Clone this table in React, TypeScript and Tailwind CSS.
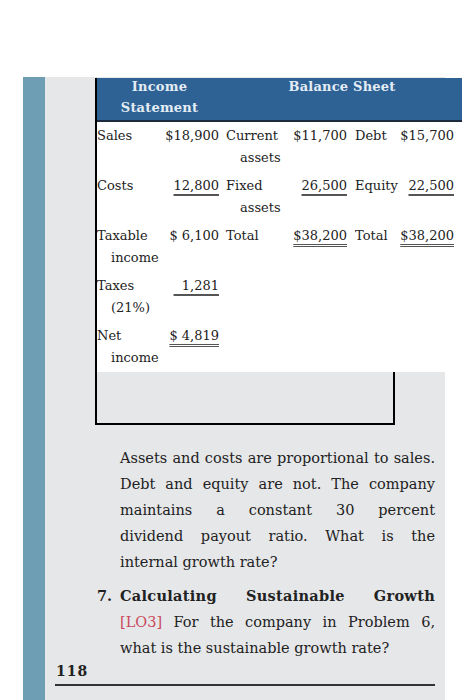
const rows = [
  { label: "Sales", amt: "$18,900", bsLabel: "Current assets", bsAmt: "$11,700", rLabel: "Debt", rAmt: "$15,700", line: "" },
  { label: "Costs", amt: "12,800", bsLabel: "Fixed assets", bsAmt: "26,500", rLabel: "Equity", rAmt: "22,500", line: "single" },
  { label: "Taxable income", amt: "$\u00a06,100", bsLabel: "Total", bsAmt: "$38,200", rLabel: "Total", rAmt: "$38,200", line: "total" },
  { label: "Taxes (21%)", amt: "\u00a0\u00a01,281", bsLabel: "", bsAmt: "", rLabel: "", rAmt: "", line: "single" },
  { label: "Net income", amt: "$\u00a04,819", bsLabel: "", bsAmt: "", rLabel: "", rAmt: "", line: "double" },
];

const single = "underline decoration-[1.5px] decoration-[#555] underline-offset-[4px]";
const dbl = "underline decoration-double decoration-1 decoration-[#555] underline-offset-[4px]";

function Table() {
  return (
    <div className="w-[365px] text-[13px] text-[#222]">
      <div className="grid grid-cols-[125px_240px] h-[44px] bg-[#2e6294] border-b-2 border-[#1b2b3d] leading-[21px] font-bold text-[#e4ecf4] tracking-[0.2px]">
        <div className="text-center -mt-[2px]">
          Income
          <br />
          Statement
        </div>
        <div className="text-center -mt-[2px]">Balance Sheet</div>
      </div>
      {rows.map((r, i) => (
        <div
          key={i}
          className="grid grid-cols-[64px_61px_64px_64px_50px_62px] h-[50px] bg-white leading-[22px] py-[3px]"
        >
          <div className="pl-[14px] -indent-[14px]">{r.label}</div>
          <div className="text-right pr-[3px] whitespace-nowrap">
            <span className={r.line === "single" ? single : r.line === "double" ? dbl : ""}>{r.amt}</span>
          </div>
          <div className="pl-[18px] -indent-[14px]">{r.bsLabel}</div>
          <div className="text-right pr-[3px] whitespace-nowrap">
            <span className={r.line === "single" ? single : r.line === "total" ? dbl : ""}>{r.bsAmt}</span>
          </div>
          <div className="pl-[5px]">{r.rLabel}</div>
          <div className="text-right pr-[8px] whitespace-nowrap">
            <span className={r.line === "single" ? single : r.line === "total" ? dbl : ""}>{r.rAmt}</span>
          </div>
        </div>
      ))}
    </div>
  );
}

function Line({ children, last }: { children: React.ReactNode; last?: boolean }) {
  return (
    <div className={last ? "whitespace-nowrap" : "text-justify [text-align-last:justify]"}>{children}</div>
  );
}

export default function App() {
  return (
    <div className="w-[468px] h-[700px] overflow-hidden bg-white flex pt-[77px] font-['DejaVu_Serif',serif] text-[#222]">
      <div className="w-[23px] shrink-0" />
      <div className="w-[22px] shrink-0 bg-[#6d9eb4]" />
      <div className="w-[400px] shrink-0 bg-[#e6e7e9]">
        <div className="ml-[50px] mt-px w-[300px] h-[347px] border-2 border-t-0 border-black">
          <Table />
        </div>

        <div className="ml-[75px] w-[315px] mt-[20px] text-[14.5px] leading-[26px]">
          <Line>Assets and costs are proportional to sales.</Line>
          <Line>Debt and equity are not. The company</Line>
          <Line>maintains a constant 30 percent</Line>
          <Line>dividend payout ratio. What is the</Line>
          <Line last>internal growth rate?</Line>
        </div>

        <div className="flex mt-[8px] ml-[52px] text-[14.5px] leading-[26px]">
          <div className="w-[23px] font-bold">7.</div>
          <div className="w-[315px]">
            <Line>
              <span className="font-bold tracking-[0.3px]">Calculating Sustainable Growth</span>
            </Line>
            <Line>
              <span className="text-[#c94a5c]">[LO3]</span> For the company in Problem 6,
            </Line>
            <Line last>what is the sustainable growth rate?</Line>
          </div>
        </div>

        <div className="ml-[11px] text-[14px] leading-[20px] font-bold tracking-[1px]">118</div>
        <div className="ml-[10px] mt-[3px] w-[380px] h-[2px] bg-[#333]" />
        <div className="ml-[75px] mt-[8px] text-[14.5px] leading-[26px] whitespace-nowrap">
          sustainable growth <span className="text-[#c94a5c]">[LO3]</span> the
        </div>
      </div>
    </div>
  );
}
